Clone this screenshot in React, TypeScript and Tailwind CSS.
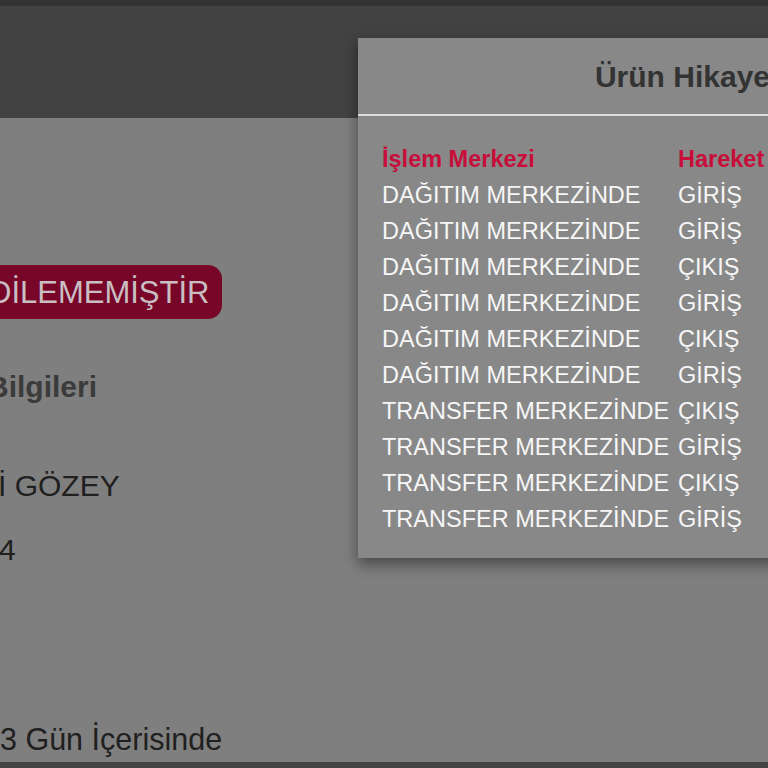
import React from 'react';

const rows: [string, string][] = [
  ['DAĞITIM MERKEZİNDE', 'GİRİŞ'],
  ['DAĞITIM MERKEZİNDE', 'GİRİŞ'],
  ['DAĞITIM MERKEZİNDE', 'ÇIKIŞ'],
  ['DAĞITIM MERKEZİNDE', 'GİRİŞ'],
  ['DAĞITIM MERKEZİNDE', 'ÇIKIŞ'],
  ['DAĞITIM MERKEZİNDE', 'GİRİŞ'],
  ['TRANSFER MERKEZİNDE', 'ÇIKIŞ'],
  ['TRANSFER MERKEZİNDE', 'GİRİŞ'],
  ['TRANSFER MERKEZİNDE', 'ÇIKIŞ'],
  ['TRANSFER MERKEZİNDE', 'GİRİŞ'],
];

const App = () => {
  return (
    <div className="relative w-[768px] h-[768px] overflow-hidden bg-[#7f7f7f] font-['Liberation_Sans',Arial,sans-serif] flex flex-col">
      {/* Header (dimmed) */}
      <header className="h-[118px] shrink-0 bg-[#424242] border-t-[6px] border-[#333333]" />

      {/* Page content (dimmed) */}
      <main className="flex-1 flex flex-col items-start text-[30px]">
        <div className="mt-[147px] ml-[-40px] h-[54px] flex items-center rounded-[14px] bg-[#770629] pl-[29px] pr-[13px] text-[31px] text-[#c9bec2] leading-none">
          DİLEMEMİŞTİR
        </div>
        <div className="mt-[51px] ml-[-13px] leading-[34px] font-bold text-[#3b3b3b]">Bilgileri</div>
        <div className="mt-[65px] ml-[-2px] leading-[34px] text-[#202020]">İ GÖZEY</div>
        <div className="mt-[30px] ml-[-1px] leading-[34px] text-[#202020]">4</div>
        <div className="mt-[155px] ml-[0px] leading-[34px] text-[30.5px] text-[#202020]">3 Gün İçerisinde</div>
      </main>
      <footer className="h-[6px] shrink-0 bg-[#444444]" />

      {/* Modal */}
      <div className="absolute left-[358px] top-[38px] w-[674px] bg-[#888888] shadow-[0_6px_14px_rgba(0,0,0,0.45)]">
        <div className="h-[78px] flex items-center justify-center border-b-2 border-[#dedede]">
          <h2 className="text-[30px] font-bold text-[#333333] pt-[1px]">Ürün Hikayesi</h2>
        </div>
        <div className="pl-[24px] pt-[25px] pb-[21px]">
          <table className="border-collapse text-[23.5px] leading-[36px]">
            <thead>
              <tr className="text-[#c70d3a] font-bold text-left">
                <th className="w-[296px] p-0 font-bold">İşlem Merkezi</th>
                <th className="p-0 font-bold whitespace-nowrap">Hareket Tipi</th>
              </tr>
            </thead>
            <tbody className="text-[#f6f6f6]">
              {rows.map((r, i) => (
                <tr key={i}>
                  <td className="p-0 whitespace-nowrap">{r[0]}</td>
                  <td className="p-0 whitespace-nowrap">{r[1]}</td>
                </tr>
              ))}
            </tbody>
          </table>
        </div>
      </div>
    </div>
  );
};

export default App;
